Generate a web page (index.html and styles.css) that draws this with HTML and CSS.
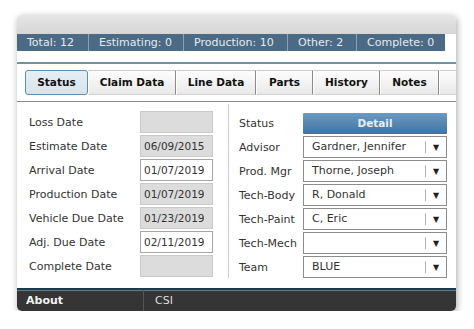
FILE: index.html
```html
<!DOCTYPE html>
<html lang="en">
<head>
    <meta charset="UTF-8">
    <meta name="viewport" content="width=device-width, initial-scale=1.0">
    <title>Repair Order - Status</title>
    <link rel="stylesheet" href="styles.css">
</head>
<body>
    <div class="window">
        <div class="titlebar"></div>

        <div class="counts">
            <div class="count c-total">Total: 12</div>
            <div class="count c-est">Estimating: 0</div>
            <div class="count c-prod">Production: 10</div>
            <div class="count c-other">Other: 2</div>
            <div class="count c-done">Complete: 0</div>
        </div>

        <div class="rule"></div>

        <div class="tabs">
            <div class="tab active" style="width: 63px">Status</div>
            <div class="tab" style="width: 88px">Claim Data</div>
            <div class="tab" style="width: 80px">Line Data</div>
            <div class="tab" style="width: 57px">Parts</div>
            <div class="tab" style="width: 67px">History</div>
            <div class="tab" style="width: 59px">Notes</div>
            <div class="tab" style="width: 40px"></div>
        </div>

        <div class="panel">
            <div class="dates">
                <div class="row">
                    <label>Loss Date</label>
                    <div class="field locked"></div>
                </div>
                <div class="row">
                    <label>Estimate Date</label>
                    <div class="field locked">06/09/2015</div>
                </div>
                <div class="row">
                    <label>Arrival Date</label>
                    <div class="field">01/07/2019</div>
                </div>
                <div class="row">
                    <label>Production Date</label>
                    <div class="field locked">01/07/2019</div>
                </div>
                <div class="row">
                    <label>Vehicle Due Date</label>
                    <div class="field locked">01/23/2019</div>
                </div>
                <div class="row">
                    <label>Adj. Due Date</label>
                    <div class="field">02/11/2019</div>
                </div>
                <div class="row">
                    <label>Complete Date</label>
                    <div class="field locked"></div>
                </div>
            </div>

            <div class="people">
                <div class="row">
                    <label>Status</label>
                    <button class="detail">Detail</button>
                </div>
                <div class="row">
                    <label>Advisor</label>
                    <div class="select"><span>Gardner, Jennifer</span><i>&#9660;</i></div>
                </div>
                <div class="row">
                    <label>Prod. Mgr</label>
                    <div class="select"><span>Thorne, Joseph</span><i>&#9660;</i></div>
                </div>
                <div class="row">
                    <label>Tech-Body</label>
                    <div class="select"><span>R, Donald</span><i>&#9660;</i></div>
                </div>
                <div class="row">
                    <label>Tech-Paint</label>
                    <div class="select"><span>C, Eric</span><i>&#9660;</i></div>
                </div>
                <div class="row">
                    <label>Tech-Mech</label>
                    <div class="select"><span></span><i>&#9660;</i></div>
                </div>
                <div class="row">
                    <label>Team</label>
                    <div class="select"><span>BLUE</span><i>&#9660;</i></div>
                </div>
            </div>
        </div>

        <div class="footer">
            <div class="about">About</div>
            <div class="app">CSI</div>
        </div>
    </div>
</body>
</html>
```

FILE: styles.css
```css
body {
    margin: 0;
    padding: 0;
    background-color: #fff;
    font-family: "DejaVu Sans", Verdana, sans-serif;
    font-size: 11px;
    color: #222;
}
.window {
    width: 439px;
    margin: 15px 0 0 17px;
    background-color: #fff;
    border-radius: 5px;
    overflow: hidden;
    box-shadow: 1px 2px 7px rgba(0, 0, 0, 0.35);
}
.titlebar {
    height: 19px;
    background: linear-gradient(#e6e6e6, #d6d6d6);
}
.counts {
    display: flex;
    width: 428px;
    height: 17px;
    background-color: #4b6a85;
}
.count {
    color: #e4eaf0;
    line-height: 17px;
    font-size: 11px;
    padding-left: 10px;
    box-sizing: border-box;
    border-right: 1px solid #8aa0b3;
}
.c-total { width: 72px; }
.c-est { width: 95px; }
.c-prod { width: 104px; }
.c-other { width: 69px; }
.c-done { width: 88px; border-right: none; }
.rule {
    height: 2px;
    margin-top: 11px;
    background-color: #6f93a4;
}
.tabs {
    display: flex;
    height: 25px;
    margin-top: 6px;
    padding-left: 8px;
    overflow: hidden;
    border-bottom: 1px solid #8c8c8c;
    padding-bottom: 6px;
}
.tab {
    flex: none;
    box-sizing: border-box;
    height: 25px;
    line-height: 23px;
    text-align: center;
    font-weight: bold;
    font-size: 10.5px;
    color: #111;
    background: linear-gradient(#fdfdfd, #e9e9e9);
    border-top: 1px solid #c9c9c9;
    border-left: 1px solid #fff;
    border-right: 1px solid #8a8a8a;
    border-bottom: 1px solid #d0d0d0;
}
.tab.active {
    background: linear-gradient(#e6eef5, #d7e3ec);
    border: 1px solid #5d8db3;
    border-radius: 3px;
}
.panel {
    display: flex;
    height: 186px;
}
.dates {
    width: 212px;
    box-sizing: border-box;
    padding: 7px 0 0 12px;
    margin: 2px 0 10px;
    border-right: 1px solid #cfcfcf;
}
.people {
    padding: 10px 0 0 10px;
}
.row {
    display: flex;
    align-items: center;
    height: 22px;
    margin-bottom: 2px;
}
.dates label {
    width: 111px;
    color: #333;
}
.people label {
    width: 64px;
    color: #333;
}
.field {
    box-sizing: border-box;
    width: 73px;
    height: 22px;
    line-height: 20px;
    padding-left: 3px;
    border: 1px solid #a6a6a6;
    background-color: #fff;
    color: #333;
    font-size: 10.5px;
}
.field.locked {
    background-color: #dcdcdc;
    border-color: #c9c9c9;
}
.detail {
    width: 144px;
    height: 21px;
    border: none;
    border-radius: 1px;
    background: linear-gradient(#6b9ac2, #3f73a1);
    color: #e7eef5;
    font-family: "DejaVu Sans", Verdana, sans-serif;
    font-weight: bold;
    font-size: 10.5px;
    padding: 0;
}
.select {
    display: flex;
    align-items: center;
    box-sizing: border-box;
    width: 144px;
    height: 22px;
    border: 1px solid #8c8c8c;
    background-color: #fff;
    color: #333;
}
.select span {
    flex: 1;
    padding-left: 8px;
    border-right: 1px solid #b4b4b4;
    height: 12px;
    line-height: 12px;
}
.select i {
    width: 20px;
    text-align: center;
    font-style: normal;
    font-size: 8px;
    color: #222;
}
.footer {
    display: flex;
    height: 21px;
    border-top: 2px solid #1d3a4a;
    box-shadow: inset 0 1px 0 #5d7f90;
    background-color: #353535;
    color: #ddd;
    line-height: 21px;
}
.about {
    width: 117px;
    padding-left: 9px;
    font-weight: bold;
    color: #f2f2f2;
    border-right: 1px solid #555;
}
.app {
    padding-left: 11px;
}
```
